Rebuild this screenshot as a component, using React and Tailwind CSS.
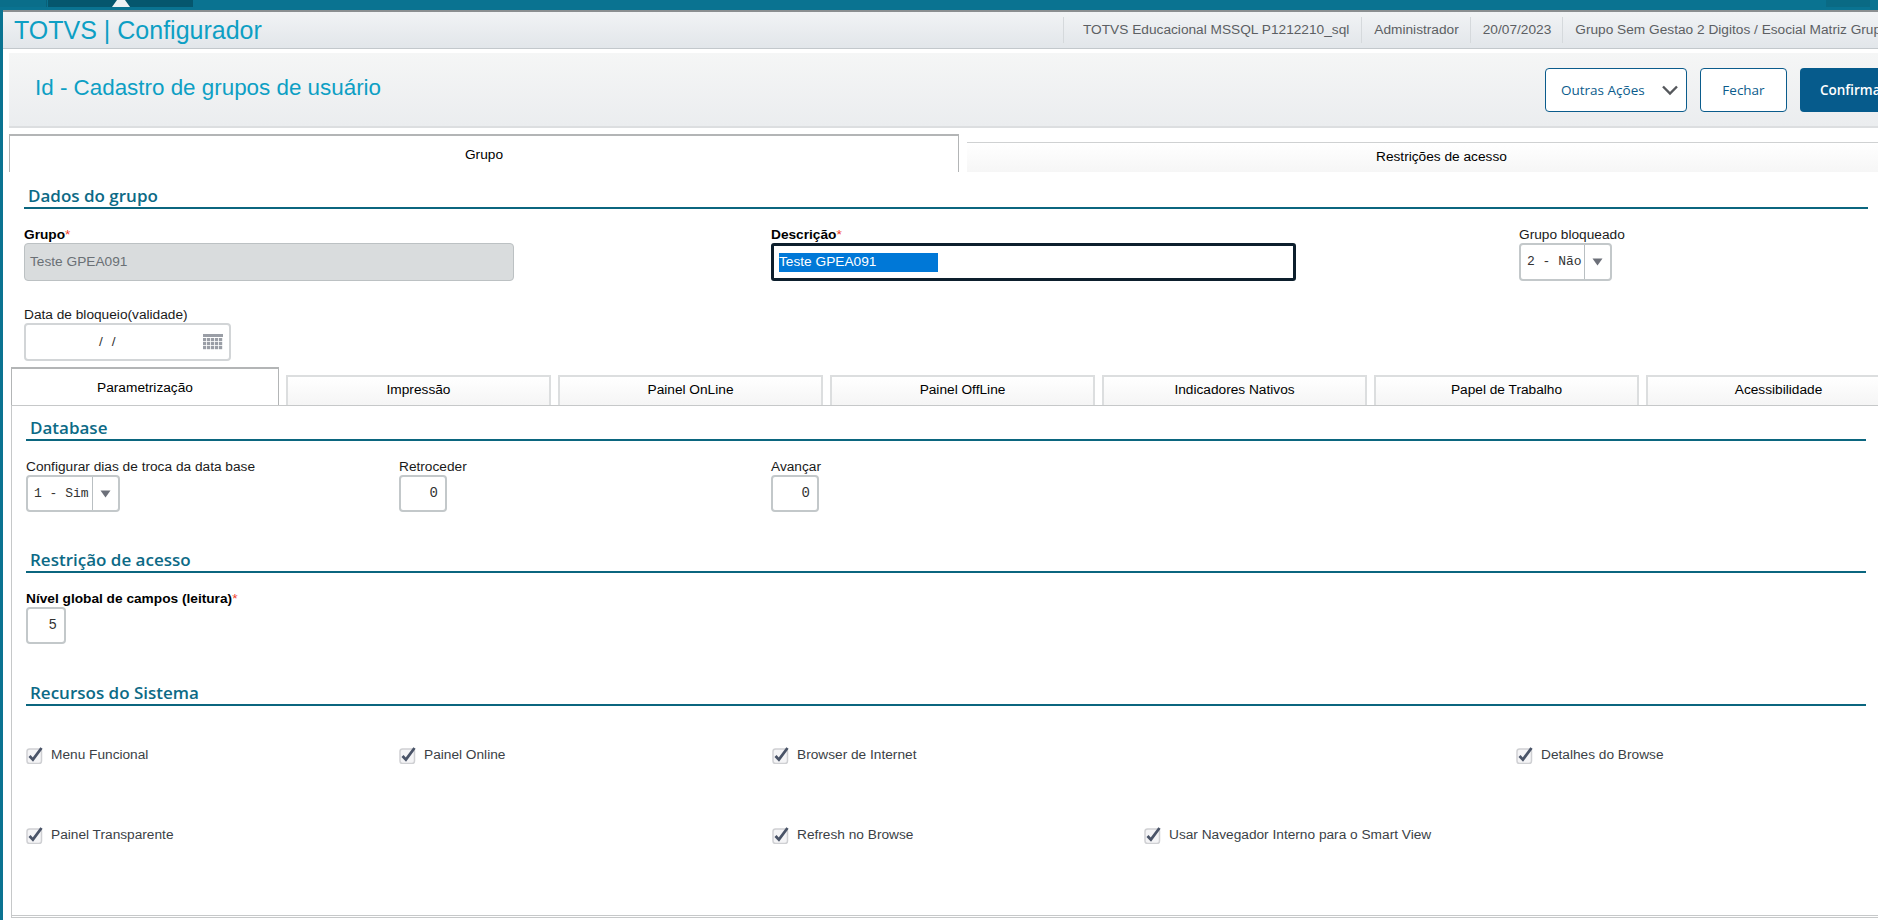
import React from 'react';

const sans = 'font-["Liberation_Sans",Arial,sans-serif]';

const SectionTitle = ({ children, className = '' }) => (
  <div className={`h-[24px] border-b-2 border-[#0b667f] pl-[4px] font-["Open_Sans",sans-serif] text-[17px] font-semibold leading-[22px] text-[#0c6a86] ${className}`}>
    {children}
  </div>
);

const Label = ({ children, required, bold }) => (
  <div className={`h-[17px] whitespace-nowrap text-[13.7px] leading-[17px] text-[#1a1a1a] ${bold ? 'font-bold text-black' : ''}`}>
    {children}
    {required && <span className="font-normal text-[#f0402a]">*</span>}
  </div>
);

const SelectBox = ({ value, width, split }) => (
  <div className={`flex h-[37px] items-center rounded-[4px] border-2 border-[#c3c8ca] bg-white ${width}`}>
    <span className={`overflow-hidden whitespace-nowrap pl-[6px] font-["Liberation_Mono",monospace] text-[13px] text-[#333] ${split}`}>{value}</span>
    <span className="flex h-full flex-1 items-center justify-center border-l border-[#b9bfc2]">
      <svg width="11" height="8" viewBox="0 0 11 8"><path d="M0.5 0.5h10L5.5 7.5z" fill="#6c7079" /></svg>
    </span>
  </div>
);

const NumberBox = ({ value, width }) => (
  <div className={`flex h-[37px] items-center justify-end rounded-[4px] border-2 border-[#c3c8ca] bg-white pr-[7px] font-["Liberation_Mono",monospace] text-[14px] text-[#333] ${width}`}>
    {value}
  </div>
);

const Check = ({ label }) => (
  <div className="flex h-[17px] items-center gap-[8px] whitespace-nowrap text-[13.7px] text-[#3b3f46]">
    <svg width="17" height="17" viewBox="0 0 17 17" className="shrink-0">
      <rect x="1" y="2" width="14.5" height="14.5" rx="2.5" fill="#f4f4f6" stroke="#cfd0d3" strokeWidth="1.5" />
      <path d="M3.5 9l3.4 3.6L15.5 1" fill="none" stroke="#4a5468" strokeWidth="2.8" />
    </svg>
    {label}
  </div>
);

const CalendarIcon = () => (
  <svg width="20" height="17" viewBox="0 0 20 17">
    <rect width="20" height="3" fill="#9a9ea6" />
    {[4, 8, 12].map((y) =>
      [0, 4, 8, 12, 16].map((x) => <rect key={`${x}-${y}`} x={x} y={y} width="3.2" height="3.2" fill="#9a9ea6" />)
    )}
  </svg>
);

const subTabs = ['Impressão', 'Painel OnLine', 'Painel OffLine', 'Indicadores Nativos', 'Papel de Trabalho', 'Acessibilidade'];

const App = () => {
  return (
    <div className={`flex h-[920px] w-[1878px] flex-col overflow-hidden bg-white ${sans}`}>
      {/* barra superior */}
      <div className="flex h-[10px] shrink-0 bg-[#0a7391]">
        <div className="h-[7px] w-[47px] border-r border-[#0a6078] bg-[#0a6e8a]" />
        <div className="ml-[1px] flex h-[7px] w-[145px] justify-center bg-[#05566d]">
          <svg width="18" height="7" viewBox="0 0 18 7"><path d="M0 7L5 0h8l5 7z" fill="#eef2f4" /></svg>
        </div>
        <div className="ml-[1633px] h-[7px] w-[44px] bg-[#0a6a84]" />
      </div>

      <div className="flex min-h-0 flex-1 flex-col border-l-[3px] border-[#0a7391]">
        {/* cabecalho */}
        <div className="flex h-[39px] shrink-0 items-center border-t-2 border-b border-t-[#8b8f91] border-b-[#c3c8cc] bg-gradient-to-b from-[#f1f3f5] to-[#e2e6ea]">
          <div className="w-[1060px] shrink-0 whitespace-nowrap pl-[11px] text-[25px] leading-[30px] text-[#0d9fc4]">TOTVS | Configurador</div>
          <div className="flex whitespace-nowrap text-[13.7px] leading-[26px] text-[#5c5f63]">
            <div className="border-l border-[#d5d9dc] pl-[19px] pr-[12px]">TOTVS Educacional MSSQL P1212210_sql</div>
            <div className="border-l border-[#d5d9dc] pl-[12px] pr-[11px]">Administrador</div>
            <div className="border-l border-[#d5d9dc] pl-[12px] pr-[11px]">20/07/2023</div>
            <div className="border-l border-[#d5d9dc] pl-[12px]">Grupo Sem Gestao 2 Digitos / Esocial Matriz Grupo Sem Gestao</div>
          </div>
        </div>

        <div className="flex min-h-0 flex-1 flex-col pl-[6px]">
          {/* titulo da pagina */}
          <div className="mt-[4px] flex h-[75px] shrink-0 border-b-2 border-[#dcdee0] bg-gradient-to-b from-[#f5f6f6] to-[#ebedef]">
            <div className="w-[1536px] shrink-0 pl-[26px] pt-[18px] text-[22.4px] leading-[34px] text-[#0d9fc4]">Id - Cadastro de grupos de usuário</div>
            <div className={`flex pt-[15px] font-["Open_Sans",sans-serif] text-[13.5px] text-[#0b5c8c]`}>
              <div className="flex h-[44px] w-[142px] shrink-0 items-center rounded-[4px] border border-[#0b5c8c] bg-white pl-[15px]">
                Outras Ações
                <svg width="18" height="12" viewBox="0 0 18 12" className="ml-[16px]"><path d="M2 2.5l7 7 7-7" fill="none" stroke="#55585c" strokeWidth="2.4" /></svg>
              </div>
              <div className="ml-[13px] flex h-[44px] w-[87px] shrink-0 items-center justify-center rounded-[4px] border border-[#0b5c8c] bg-white">Fechar</div>
              <div className="ml-[13px] flex h-[44px] w-[110px] shrink-0 items-center rounded-[4px] bg-[#065b8c] pl-[20px] font-semibold text-white">Confirmar</div>
            </div>
          </div>

          {/* abas principais */}
          <div className="mt-[6px] flex h-[38px] shrink-0 items-end">
            <div className="flex h-[38px] w-[950px] shrink-0 justify-center border-x border-t-2 border-[#b3b5b6] pt-[9px] text-[13.7px] leading-[20px] text-black">Grupo</div>
            <div className="ml-[8px] h-[30px] w-[920px] shrink-0 border-t border-[#cfd1d2] bg-gradient-to-b from-white to-[#f6f6f6] pl-[409px] text-[13.7px] leading-[27px] text-black">Restrições de acesso</div>
          </div>

          <div className="pl-[15px] pr-[10px]">
            <SectionTitle className="mt-[13px]">Dados do grupo</SectionTitle>

            <div className="mt-[17px] grid grid-cols-[747px_748px_1fr]">
              <div>
                <Label bold required>Grupo</Label>
                <div className="flex h-[38px] w-[490px] items-center rounded-[4px] border border-[#bcc1c3] bg-[#d9dcdd] pl-[5px] text-[13.7px] text-[#6a7075]">Teste GPEA091</div>
              </div>
              <div>
                <Label bold required>Descrição</Label>
                <div className="flex h-[38px] w-[525px] items-center rounded-[3px] border-[3px] border-[#0d1f2d] bg-white pl-[5px]">
                  <span className="flex h-[19px] w-[159px] items-center bg-[#0078d7] text-[13.7px] text-white">Teste GPEA091</span>
                </div>
              </div>
              <div>
                <Label>Grupo bloqueado</Label>
                <SelectBox value="2 - Não" width="w-[93px] h-[38px]" split="w-[63px]" />
              </div>
            </div>

            <div className="mt-[25px]">
              <Label>Data de bloqueio(validade)</Label>
              <div className="flex h-[38px] w-[207px] items-center justify-between rounded-[4px] border-2 border-[#d2d5d7] bg-white pl-[73px] pr-[6px]">
                <span className="flex gap-[9px] text-[13.7px] text-[#333]"><span>/</span><span>/</span></span>
                <CalendarIcon />
              </div>
            </div>
          </div>

          {/* abas internas */}
          <div className="mt-[6px] flex h-[38px] shrink-0 items-end gap-[7px] pl-[2px]">
            <div className="flex h-[38px] w-[268px] shrink-0 justify-center border-x border-t-2 border-[#b3b5b6] pt-[9px] text-[13.7px] leading-[20px] text-black">Parametrização</div>
            {subTabs.map((tab) => (
              <div key={tab} className="flex h-[30px] w-[265px] shrink-0 justify-center border-x-2 border-t-2 border-[#dcdedf] bg-gradient-to-b from-white to-[#f5f5f5] text-[13.7px] leading-[26px] text-black">{tab}</div>
            ))}
          </div>

          {/* painel */}
          <div className="ml-[2px] mb-[2px] flex min-h-0 flex-1 flex-col border-l border-t border-b-[3px] border-[#c6c8c9] pl-[14px] pr-[12px] [border-bottom-style:double]">
            <SectionTitle className="mt-[11px]">Database</SectionTitle>
            <div className="mt-[17px] grid grid-cols-[373px_372px_1fr]">
              <div>
                <Label>Configurar dias de troca da data base</Label>
                <SelectBox value="1 - Sim" width="w-[94px]" split="w-[64px]" />
              </div>
              <div>
                <Label>Retroceder</Label>
                <NumberBox value="0" width="w-[48px]" />
              </div>
              <div>
                <Label>Avançar</Label>
                <NumberBox value="0" width="w-[48px]" />
              </div>
            </div>

            <SectionTitle className="mt-[37px]">Restrição de acesso</SectionTitle>
            <div className="mt-[17px]">
              <Label bold required>Nível global de campos (leitura)</Label>
              <NumberBox value="5" width="w-[40px]" />
            </div>

            <SectionTitle className="mt-[38px]">Recursos do Sistema</SectionTitle>
            <div className="mt-[41px] grid grid-cols-[373px_373px_372px_1fr] grid-rows-[80px_80px]">
              <Check label="Menu Funcional" />
              <Check label="Painel Online" />
              <Check label="Browser de Internet" />
              <div className="pl-[372px]"><Check label="Detalhes do Browse" /></div>
              <Check label="Painel Transparente" />
              <div />
              <Check label="Refresh no Browse" />
              <Check label="Usar Navegador Interno para o Smart View" />
            </div>
          </div>
        </div>
      </div>
    </div>
  );
};

export default App;
